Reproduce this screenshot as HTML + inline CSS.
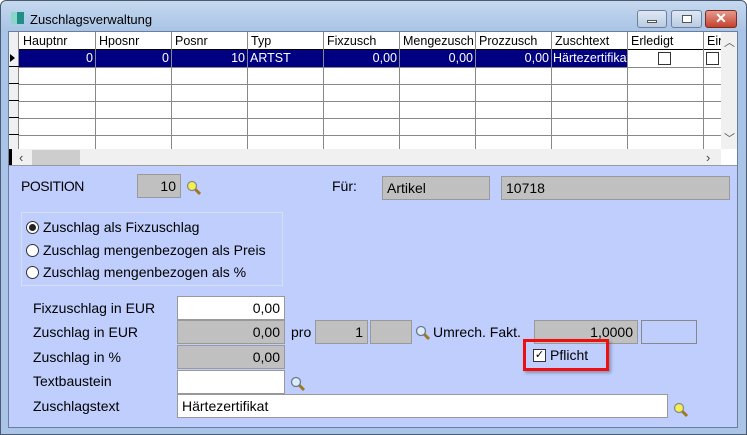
<!DOCTYPE html>
<html><head><meta charset="utf-8"><style>
*{margin:0;padding:0;box-sizing:border-box}
body{width:747px;height:435px;overflow:hidden;font-family:"Liberation Sans",Arial,sans-serif;font-size:13px;background:#fff;position:relative}
.a{position:absolute}
#frame{left:0;top:0;width:747px;height:435px;background:linear-gradient(#c5d8ee,#a9c4e6 30px,#a9c4e6);border:1px solid #4a5a70;border-radius:6px 6px 0 0}
#client{left:8px;top:31px;width:730px;height:397px;background:#bfcefd;border:1px solid #6a7f9c}
#grid{left:0;top:0;width:728px;height:134px;background:#fff;border-bottom:1px solid #999;overflow:hidden}
.hd{top:0;height:18px;line-height:18px;padding-left:4px;color:#000;font-size:12.5px}
.vl{width:1px;background:#888;top:0;height:117px}
.hl{height:1px;background:#888;left:10px;width:702px}
.sel{left:10px;top:18px;width:723px;height:17px;background:#000080}
.c{top:18px;height:17px;line-height:17px;color:#fff;font-size:12.5px}
.fld{height:24px;border:1px solid #999;line-height:22px;padding:0 4px;font-size:14px}
.g{background:#c0c0c0}
.w{background:#fff}
.lbl{font-size:14px}
.btn{top:10px;height:18px;border:1px solid #6d7f99;border-radius:3px;background:linear-gradient(#dfe9f5,#b9cbe2)}
.rad{width:13px;height:13px;border:1px solid #333;border-radius:50%;background:#fff}
</style></head><body>
<div id="frame" class="a"></div>
<div class="a" style="left:11px;top:12px;width:6px;height:12px;background:#8dd4c9"></div>
<div class="a" style="left:17px;top:12px;width:7px;height:12px;background:#1f8f88"></div>
<div class="a" style="left:30px;top:12px;font-size:13px">Zuschlagsverwaltung</div>
<div class="a btn" style="left:637px;width:30px"><div class="a" style="left:9px;top:9px;width:10px;height:3px;background:#fff;border:1px solid #555"></div></div>
<div class="a btn" style="left:671px;width:31px"><div class="a" style="left:10px;top:4px;width:10px;height:8px;background:#fff;border:1px solid #555"></div></div>
<div class="a btn" style="left:705px;width:32px;background:linear-gradient(#e59b8e,#c5422f);border-color:#7d2a20;color:#fff;text-align:center;font-weight:bold;font-size:14px;line-height:15px">✕</div>

<div id="client" class="a">
<div id="grid" class="a">
<div class="a" style="left:0;top:0;width:10px;height:117px;background:#f0f0f0;border-right:1px solid #888"></div>
<div class="a" style="left:1px;top:22px;width:0;height:0;border-left:5px solid #000;border-top:4px solid transparent;border-bottom:4px solid transparent"></div>
<div class="a sel"></div>
<div class="a hl" style="top:17px;background:#000"></div>
<div class="a hl" style="top:35px"></div><div class="a hl" style="top:52px"></div><div class="a hl" style="top:69px"></div><div class="a hl" style="top:86px"></div><div class="a hl" style="top:103px"></div>
<div class="a" style="left:0;top:34px;width:10px;height:1px;background:#000"></div>
<div class="a" style="left:0;top:51px;width:10px;height:1px;background:#000"></div>
<div class="a" style="left:0;top:68px;width:10px;height:1px;background:#000"></div>
<div class="a" style="left:0;top:85px;width:10px;height:1px;background:#000"></div>
<div class="a" style="left:0;top:102px;width:10px;height:1px;background:#000"></div>
<div class="a vl" style="left:86px"></div><div class="a vl" style="left:162px"></div><div class="a vl" style="left:238px"></div><div class="a vl" style="left:314px"></div><div class="a vl" style="left:390px"></div><div class="a vl" style="left:466px"></div><div class="a vl" style="left:542px"></div><div class="a vl" style="left:618px"></div><div class="a vl" style="left:694px"></div>
<div class="a hd" style="left:10px">Hauptnr</div><div class="a hd" style="left:86px">Hposnr</div><div class="a hd" style="left:162px">Posnr</div><div class="a hd" style="left:238px">Typ</div><div class="a hd" style="left:314px">Fixzusch</div><div class="a hd" style="left:390px">Mengezusch</div><div class="a hd" style="left:466px">Prozzusch</div><div class="a hd" style="left:542px">Zuschtext</div><div class="a hd" style="left:618px">Erledigt</div><div class="a hd" style="left:694px">Ein</div>
<div class="a c" style="left:10px;width:74px;text-align:right">0</div>
<div class="a c" style="left:86px;width:74px;text-align:right">0</div>
<div class="a c" style="left:162px;width:74px;text-align:right">10</div>
<div class="a c" style="left:241px">ARTST</div>
<div class="a c" style="left:314px;width:74px;text-align:right">0,00</div>
<div class="a c" style="left:390px;width:74px;text-align:right">0,00</div>
<div class="a c" style="left:466px;width:74px;text-align:right">0,00</div>
<div class="a c" style="left:544px;width:74px;overflow:hidden;white-space:nowrap">Härtezertifikat</div>
<div class="a" style="left:619px;top:18px;width:75px;height:17px;background:#fff"></div>
<div class="a" style="left:695px;top:18px;width:17px;height:17px;background:#fff"></div>
<div class="a" style="left:649px;top:20px;width:13px;height:13px;border:1px solid #333"></div>
<div class="a" style="left:697px;top:20px;width:13px;height:13px;border:1px solid #333"></div>
<div class="a" style="left:712px;top:0;width:17px;height:117px;background:#f0f0f0;color:#555;text-align:center;font-size:11px"><div style="margin-top:2px">︿</div><div style="margin-top:80px">﹀</div></div>
<div class="a" style="left:0;top:117px;width:712px;height:17px;background:#f0f0f0"></div>
<div class="a" style="left:0;top:117px;width:3px;height:17px;background:#000"></div>
<div class="a" style="left:23px;top:118px;width:48px;height:15px;background:#cdcdcd"></div>
<div class="a" style="left:10px;top:117px;font-size:13px;color:#444;line-height:17px">‹</div>
<div class="a" style="left:697px;top:117px;font-size:13px;color:#444;line-height:17px">›</div>
</div>

<div class="a lbl" style="left:12px;top:146px;letter-spacing:-0.5px">POSITION</div>
<div class="a fld g" style="left:128px;top:142px;width:44px;text-align:right">10</div>
<svg class="a" style="left:177px;top:148px" width="16" height="16"><line x1="9" y1="9" x2="14" y2="14" stroke="#a07820" stroke-width="3"/><circle cx="6" cy="6" r="4.5" fill="#f4f050" stroke="#8a8a8a" stroke-width="1.3"/></svg>
<div class="a lbl" style="left:323px;top:146px">Für:</div>
<div class="a fld g" style="left:373px;top:144px;width:108px">Artikel</div>
<div class="a fld g" style="left:492px;top:144px;width:229px">10718</div>

<div class="a" style="left:12px;top:180px;width:262px;height:74px;border:1px solid #d8e0f0"></div>
<div class="a rad" style="left:17px;top:189px"><div class="a" style="left:2px;top:2px;width:7px;height:7px;border-radius:50%;background:#222"></div></div>
<div class="a lbl" style="left:34px;top:187px">Zuschlag als Fixzuschlag</div>
<div class="a rad" style="left:17px;top:212px"></div>
<div class="a lbl" style="left:34px;top:210px">Zuschlag mengenbezogen als Preis</div>
<div class="a rad" style="left:17px;top:234px"></div>
<div class="a lbl" style="left:34px;top:232px">Zuschlag mengenbezogen als %</div>

<div class="a lbl" style="left:24px;top:268px">Fixzuschlag in EUR</div>
<div class="a fld w" style="left:168px;top:264px;width:108px;text-align:right">0,00</div>
<div class="a lbl" style="left:24px;top:292px">Zuschlag in EUR</div>
<div class="a fld g" style="left:168px;top:288px;width:108px;text-align:right">0,00</div>
<div class="a lbl" style="left:282px;top:292px">pro</div>
<div class="a fld g" style="left:306px;top:288px;width:53px;text-align:right">1</div>
<div class="a fld g" style="left:361px;top:288px;width:42px"></div>
<svg class="a" style="left:406px;top:293px" width="16" height="16"><line x1="9" y1="9" x2="14" y2="14" stroke="#a07820" stroke-width="3"/><circle cx="6" cy="6" r="4.5" fill="#dcecfa" stroke="#6a7a8a" stroke-width="1.3"/></svg>
<div class="a lbl" style="left:424px;top:292px">Umrech. Fakt.</div>
<div class="a fld g" style="left:525px;top:288px;width:104px;text-align:right">1,0000</div>
<div class="a fld" style="left:632px;top:288px;width:56px;border-color:#888"></div>
<div class="a lbl" style="left:24px;top:317px">Zuschlag in %</div>
<div class="a fld g" style="left:168px;top:313px;width:108px;text-align:right">0,00</div>
<div class="a" style="left:514px;top:307px;width:86px;height:32px;border:3px solid #ee1010;box-shadow:2px 2px 3px rgba(0,0,0,.3)"></div>
<div class="a" style="left:524px;top:317px;width:13px;height:13px;border:1px solid #333;background:#fff;font-size:11px;line-height:11px;text-align:center">✓</div>
<div class="a lbl" style="left:541px;top:315px">Pflicht</div>
<div class="a lbl" style="left:24px;top:341px">Textbaustein</div>
<div class="a fld w" style="left:168px;top:338px;width:108px"></div>
<svg class="a" style="left:281px;top:344px" width="16" height="16"><line x1="9" y1="9" x2="14" y2="14" stroke="#a07820" stroke-width="3"/><circle cx="6" cy="6" r="4.5" fill="#dcecfa" stroke="#6a7a8a" stroke-width="1.3"/></svg>
<div class="a lbl" style="left:24px;top:366px">Zuschlagstext</div>
<div class="a fld w" style="left:168px;top:362px;width:491px">Härtezertifikat</div>
<svg class="a" style="left:664px;top:370px" width="16" height="16"><line x1="9" y1="9" x2="14" y2="14" stroke="#a07820" stroke-width="3"/><circle cx="6" cy="6" r="4.5" fill="#f4f050" stroke="#8a8a8a" stroke-width="1.3"/></svg>
</div>
</body></html>
